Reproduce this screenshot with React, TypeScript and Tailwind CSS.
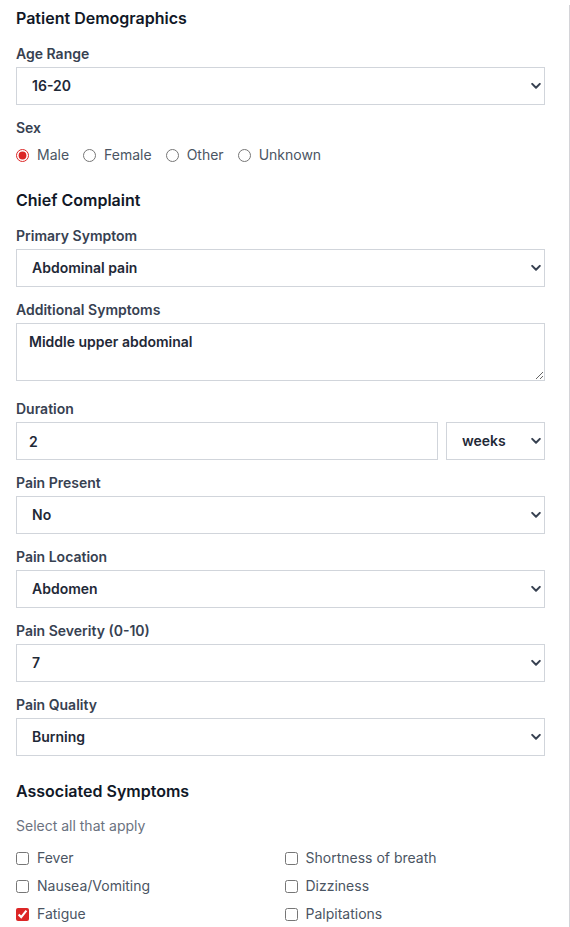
import React from "react";

const Chevron = () => (
  <svg
    className="pointer-events-none absolute right-[4px] top-1/2 -translate-y-1/2"
    width="10"
    height="7"
    viewBox="0 0 10 7"
    fill="none"
  >
    <path d="M1.2 1.4 L5 5.2 L8.8 1.4" stroke="#374151" strokeWidth="2" strokeLinecap="round" strokeLinejoin="round" />
  </svg>
);

const Select = ({ value, options, className = "" }: { value: string; options: string[]; className?: string }) => (
  <div className={"relative " + className}>
    <select
      defaultValue={value}
      className="block h-[38px] w-full appearance-none border border-[#d1d5db] bg-white pl-[15px] pr-6 text-sm font-semibold leading-5 text-[#1f2937] outline-none"
    >
      {options.map((o) => (
        <option key={o}>{o}</option>
      ))}
    </select>
    <Chevron />
  </div>
);

const Label = ({ children, mb = "mb-1" }: { children: React.ReactNode; mb?: string }) => (
  <div className={"pt-[1px] text-sm font-semibold leading-[19px] text-[#374151] " + mb}>{children}</div>
);

const Heading = ({ children }: { children: React.ReactNode }) => (
  <h2 className="mb-[13px] text-base font-semibold leading-6 text-[#111827]">{children}</h2>
);

const Radio = ({ label, checked = false }: { label: string; checked?: boolean }) => (
  <label className="flex items-center gap-2 text-sm leading-5 text-[#4b5563]">
    <input type="radio" name="sex" defaultChecked={checked} className="m-0 h-[13px] w-[13px] accent-[#dc2626]" />
    <span>{label}</span>
  </label>
);

const Check = ({ label, checked = false }: { label: string; checked?: boolean }) => (
  <label className="flex h-5 items-center gap-2 text-sm leading-5 text-[#4b5563]">
    <input type="checkbox" defaultChecked={checked} className="m-0 h-[13px] w-[13px] accent-[#dc2626]" />
    <span>{label}</span>
  </label>
);

export default function App() {
  return (
    <div
      className="mt-[5px] min-h-[922px] w-[570px] border-r border-[#d4d4d8] bg-white"
      style={{ fontFamily: "Inter, 'Noto Sans', sans-serif" }}
    >
      <div className="pl-4 pr-6 pt-[1px]">
        {/* Patient Demographics */}
        <section className="mb-[23px]">
          <Heading>Patient Demographics</Heading>
          <div className="mb-3">
            <Label>Age Range</Label>
            <Select value="16-20" options={["0-5", "6-10", "11-15", "16-20", "21-30", "31-40"]} />
          </div>
          <div>
            <Label mb="mb-2">Sex</Label>
            <div className="flex h-5 items-center gap-[14px]">
              <Radio label="Male" checked />
              <Radio label="Female" />
              <Radio label="Other" />
              <Radio label="Unknown" />
            </div>
          </div>
        </section>

        {/* Chief Complaint */}
        <section className="mb-[23px]">
          <Heading>Chief Complaint</Heading>
          <div className="mb-3">
            <Label>Primary Symptom</Label>
            <Select value="Abdominal pain" options={["Abdominal pain", "Chest pain", "Headache", "Back pain"]} />
          </div>
          <div className="mb-[17px]">
            <Label>Additional Symptoms</Label>
            <textarea
              rows={2}
              defaultValue="Middle upper abdominal"
              className="block h-[58px] w-full border border-[#d1d5db] bg-white px-3 py-2 text-sm font-semibold leading-5 text-[#1f2937] outline-none"
            />
          </div>
          <div className="mb-3">
            <Label>Duration</Label>
            <div className="flex gap-2">
              <input
                type="text"
                defaultValue="2"
                className="block h-[38px] min-w-0 flex-1 border border-[#d1d5db] bg-white px-3 text-sm font-semibold leading-5 text-[#1f2937] outline-none"
              />
              <Select value="weeks" options={["hours", "days", "weeks", "months"]} className="w-[99px]" />
            </div>
          </div>
          <div className="mb-3">
            <Label>Pain Present</Label>
            <Select value="No" options={["Yes", "No"]} />
          </div>
          <div className="mb-3">
            <Label>Pain Location</Label>
            <Select value="Abdomen" options={["Head", "Chest", "Abdomen", "Back"]} />
          </div>
          <div className="mb-3">
            <Label>Pain Severity (0-10)</Label>
            <Select value="7" options={["0", "1", "2", "3", "4", "5", "6", "7", "8", "9", "10"]} />
          </div>
          <div>
            <Label>Pain Quality</Label>
            <Select value="Burning" options={["Sharp", "Dull", "Burning", "Cramping"]} />
          </div>
        </section>

        {/* Associated Symptoms */}
        <section>
          <Heading>Associated Symptoms</Heading>
          <p className="mb-3 text-sm leading-5 text-[#6b7280]">Select all that apply</p>
          <div className="grid grid-cols-2 gap-x-2 gap-y-2">
            <Check label="Fever" />
            <Check label="Shortness of breath" />
            <Check label="Nausea/Vomiting" />
            <Check label="Dizziness" />
            <Check label="Fatigue" checked />
            <Check label="Palpitations" />
          </div>
        </section>
      </div>
    </div>
  );
}
